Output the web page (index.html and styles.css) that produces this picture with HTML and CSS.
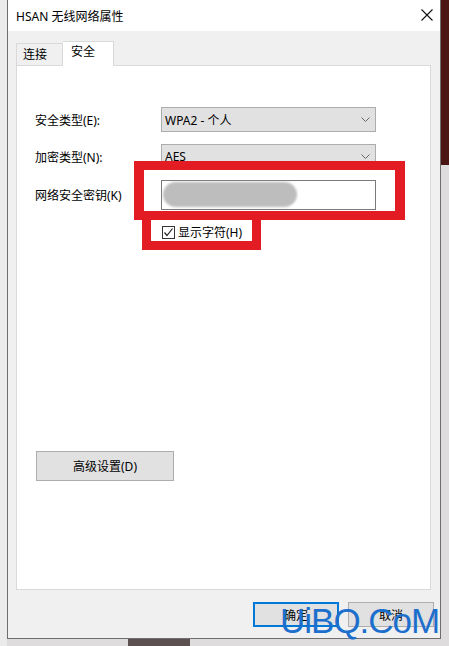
FILE: index.html
```html
<!DOCTYPE html>
<html lang="zh">
<head>
    <meta charset="UTF-8">
    <meta name="viewport" content="width=device-width, initial-scale=1.0">
    <title>HSAN 无线网络属性</title>
    <link rel="stylesheet" href="styles.css">
</head>
<body>
    <div class="window">
        <!-- 标题栏 -->
        <div class="titlebar">
            <span class="title">HSAN 无线网络属性</span>
            <svg class="close" width="12" height="12" viewBox="0 0 12 12">
                <path d="M0.5 0.5 L11.5 11.5 M11.5 0.5 L0.5 11.5" stroke="#111" stroke-width="1.1" fill="none"/>
            </svg>
        </div>

        <div class="content">
            <!-- 选项卡 -->
            <div class="tabs">
                <div class="tab">连接</div>
                <div class="tab active">安全</div>
            </div>

            <div class="panel">
                <div class="row">
                    <span class="label">安全类型(E):</span>
                    <div class="select">
                        <span>WPA2 - 个人</span>
                        <svg width="9" height="5" viewBox="0 0 9 5"><polyline points="0.5,0.5 4.5,4.5 8.5,0.5" stroke="#666" fill="none"/></svg>
                    </div>
                </div>
                <div class="row">
                    <span class="label">加密类型(N):</span>
                    <div class="select">
                        <span>AES</span>
                        <svg width="9" height="5" viewBox="0 0 9 5"><polyline points="0.5,0.5 4.5,4.5 8.5,0.5" stroke="#666" fill="none"/></svg>
                    </div>
                </div>
                <div class="row row-key">
                    <span class="label">网络安全密钥(K)</span>
                    <div class="input">
                        <div class="blur"></div>
                    </div>
                </div>
                <div class="check-row">
                    <span class="checkbox">
                        <svg width="11" height="11" viewBox="0 0 11 11"><polyline points="1.5,5.5 4,8.5 9.5,1.5" stroke="#222" stroke-width="1.2" fill="none"/></svg>
                    </span>
                    <span>显示字符(H)</span>
                </div>

                <div class="btn advanced">高级设置(D)</div>
            </div>

            <!-- 底部按钮 -->
            <div class="footer">
                <div class="btn ok">确定</div>
                <div class="btn">取消</div>
            </div>
        </div>
    </div>

    <!-- 标注框 -->
    <div class="mark mark-key"></div>
    <div class="mark mark-check"></div>

    <div class="watermark">UiBQ.CoM</div>
</body>
</html>
```

FILE: styles.css
```css
body {
    margin: 0;
    width: 449px;
    height: 646px;
    overflow: hidden;
    font-family: "Noto Sans", "Noto Sans CJK SC", sans-serif;
    font-size: 12px;
    color: #000;
    background:
        linear-gradient(#4a1513, #4a1513) right top / 8px 165px no-repeat,
        linear-gradient(#5c5051, #5c5051) 128px bottom / 62px 7px no-repeat,
        linear-gradient(#ebebeb, #ebebeb) left top / 7px 100% no-repeat,
        #dedcdc;
}
.window {
    margin-left: 7px;
    width: 434px;
    height: 639px;
    box-sizing: border-box;
    border: 1px solid #6e6e6e;
    border-top: none;
    background: #f0f0f0;
    display: flex;
    flex-direction: column;
}
.titlebar {
    height: 31px;
    background: #fff;
    display: flex;
    align-items: center;
    justify-content: space-between;
    padding: 0 7px 0 8px;
}
.close {
    margin-top: -1px;
}
.content {
    padding: 9px 0 0 8px;
}
.tabs {
    display: flex;
    align-items: flex-end;
    height: 25px;
}
.tab {
    width: 47px;
    height: 22px;
    box-sizing: border-box;
    padding-left: 6px;
    border: 1px solid #d9d9d9;
    border-bottom: none;
    line-height: 22px;
    background: #f0f0f0;
}
.tab.active {
    width: 51px;
    height: 25px;
    padding-left: 8px;
    line-height: 20px;
    background: #fff;
    border-left: none;
    position: relative;
    margin-bottom: -1px;
    z-index: 1;
}
.panel {
    width: 415px;
    height: 525px;
    box-sizing: border-box;
    border: 1px solid #d9d9d9;
    background: #fff;
    padding: 41px 0 0 18px;
}
.row {
    display: flex;
    align-items: center;
    margin-bottom: 12px;
}
.label {
    width: 126px;
}
.select {
    width: 215px;
    height: 25px;
    box-sizing: border-box;
    border: 1px solid #adadad;
    background: #e1e1e1;
    display: flex;
    align-items: center;
    justify-content: space-between;
    padding: 0 5px 0 3px;
}
.row-key {
    margin-top: -1px;
    margin-bottom: 0;
}
.input {
    width: 215px;
    height: 30px;
    box-sizing: border-box;
    border: 1px solid #7a7a7a;
    background: #fff;
    padding: 1px 0 0 1px;
}
.blur {
    width: 134px;
    height: 25px;
    border-radius: 13px;
    background: #bdbdbd;
    filter: blur(1px);
}
.check-row {
    display: flex;
    align-items: center;
    gap: 3px;
    margin: 15px 0 0 127px;
    height: 14px;
}
.checkbox {
    width: 13px;
    height: 13px;
    box-sizing: border-box;
    border: 1px solid #333;
    display: flex;
    align-items: center;
    justify-content: center;
}
.btn {
    height: 25px;
    box-sizing: border-box;
    border: 1px solid #adadad;
    background: #e1e1e1;
    display: flex;
    align-items: center;
    justify-content: center;
}
.advanced {
    width: 138px;
    height: 30px;
    margin: 212px 0 0 1px;
}
.footer {
    display: flex;
    justify-content: flex-end;
    gap: 9px;
    padding: 12px 6px 0 0;
}
.footer .btn {
    width: 86px;
}
.btn.ok {
    border: 2px solid #0078d7;
}
/* 红色标注 */
.mark {
    position: absolute;
    box-sizing: border-box;
    border-style: solid;
    border-color: #e31b23;
}
.mark-key {
    left: 134px;
    top: 161px;
    width: 271px;
    height: 59px;
    border-width: 9px 10px;
}
.mark-check {
    left: 142px;
    top: 211px;
    width: 119px;
    height: 39px;
    border-width: 9px;
    border-top: none;
    padding-top: 9px;
}
.watermark {
    position: absolute;
    left: 280px;
    top: 603px;
    font-family: "Liberation Sans", Arial, sans-serif;
    font-size: 35px;
    line-height: 35px;
    letter-spacing: -1px;
    color: #1c6fcc;
}
```
